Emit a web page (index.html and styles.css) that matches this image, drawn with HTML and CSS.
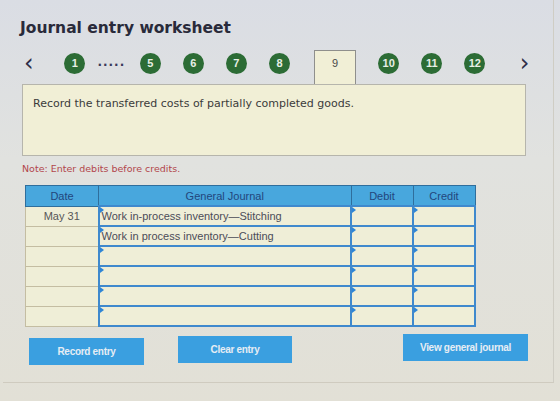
FILE: index.html
```html
<!DOCTYPE html>
<html lang="en">
<head>
    <meta charset="UTF-8">
    <meta name="viewport" content="width=device-width, initial-scale=1.0">
    <title>Journal entry worksheet</title>
    <link rel="stylesheet" href="styles.css">
</head>
<body>

    <div class="sheet">
        <h1 class="title">Journal entry worksheet</h1>

        <!-- Step navigation -->
        <div class="steps">
            <span class="arrow prev">&lsaquo;</span>
            <span class="slot"><span class="dot">1</span></span>
            <span class="more">.....</span>
            <span class="slot"><span class="dot">5</span></span>
            <span class="slot"><span class="dot">6</span></span>
            <span class="slot"><span class="dot">7</span></span>
            <span class="slot"><span class="dot">8</span></span>
            <span class="tab">9</span>
            <span class="slot"><span class="dot">10</span></span>
            <span class="slot"><span class="dot">11</span></span>
            <span class="slot"><span class="dot">12</span></span>
            <span class="arrow next">&rsaquo;</span>
        </div>

        <div class="task">
            Record the transferred costs of partially completed goods.
        </div>

        <p class="note">Note: Enter debits before credits.</p>

        <table class="journal">
            <thead>
                <tr>
                    <th class="c-date">Date</th>
                    <th class="c-acct">General Journal</th>
                    <th class="c-amt">Debit</th>
                    <th class="c-amt">Credit</th>
                </tr>
            </thead>
            <tbody>
                <tr>
                    <td class="date">May 31</td>
                    <td class="field acct">Work in-process inventory&mdash;Stitching</td>
                    <td class="field"></td>
                    <td class="field"></td>
                </tr>
                <tr>
                    <td class="date"></td>
                    <td class="field acct">Work in process inventory&mdash;Cutting</td>
                    <td class="field"></td>
                    <td class="field"></td>
                </tr>
                <tr>
                    <td class="date"></td>
                    <td class="field acct"></td>
                    <td class="field"></td>
                    <td class="field"></td>
                </tr>
                <tr>
                    <td class="date"></td>
                    <td class="field acct"></td>
                    <td class="field"></td>
                    <td class="field"></td>
                </tr>
                <tr>
                    <td class="date"></td>
                    <td class="field acct"></td>
                    <td class="field"></td>
                    <td class="field"></td>
                </tr>
                <tr>
                    <td class="date"></td>
                    <td class="field acct"></td>
                    <td class="field"></td>
                    <td class="field"></td>
                </tr>
            </tbody>
        </table>

        <div class="actions">
            <button class="btn record">Record entry</button>
            <button class="btn clear">Clear entry</button>
            <button class="btn view">View general journal</button>
        </div>
    </div>

</body>
</html>
```

FILE: styles.css
```css
/* Page */
body {
    margin: 0;
    height: 401px;
    overflow: hidden;
    font-family: "DejaVu Sans", Verdana, sans-serif;
    background: linear-gradient(180deg, #dadde4 0%, #e1e2df 40%, #e2e0d6 100%);
}

.sheet {
    height: 383px;
    margin-left: 3px;
    width: 551px;
    box-sizing: border-box;
    border-right: 1px solid #cfcdc4;
    border-bottom: 1px solid #cfcbbf;
    padding: 18px 0 0 17px;
}

/* Title */
.title {
    margin: 0;
    font-size: 15.5px;
    font-weight: bold;
    color: #292a3a;
    line-height: 21px;
}

/* Step navigation */
.steps {
    display: flex;
    align-items: flex-start;
    height: 34px;
    margin-top: 11px;
    margin-left: 4px;
}

.arrow {
    font-family: "DejaVu Sans", sans-serif;
    font-size: 24px;
    line-height: 24px;
    color: #2e2e48;
    margin-top: 1px;
}

.prev {
    width: 30px;
}

.next {
    width: 58px;
    text-align: center;
}

.slot {
    width: 44px;
    display: flex;
    justify-content: center;
}

.dot {
    width: 21px;
    height: 21px;
    margin-top: 3px;
    border-radius: 50%;
    background: #2c6c35;
    color: #e8efe6;
    font-family: "Liberation Sans", Arial, sans-serif;
    font-size: 11px;
    font-weight: bold;
    line-height: 21px;
    text-align: center;
}

.more {
    width: 33px;
    box-sizing: border-box;
    padding-left: 1px;
    color: #39395a;
    font-size: 12px;
    letter-spacing: 1px;
    font-weight: bold;
    line-height: 24px;
}

.tab {
    position: relative;
    z-index: 1;
    width: 43px;
    height: 34px;
    margin-left: 13px;
    margin-right: 11px;
    box-sizing: border-box;
    border: 1px solid #8f8f8c;
    border-bottom: none;
    background: #f1efd6;
    color: #4a4a4a;
    font-family: "Liberation Sans", Arial, sans-serif;
    font-size: 11px;
    text-align: center;
    padding-top: 6px;
}

/* Task description */
.task {
    width: 504px;
    height: 72px;
    margin-left: 2px;
    box-sizing: border-box;
    border: 1px solid #b6b5ac;
    background: #f1efd6;
    padding: 12px 0 0 10px;
    font-size: 11px;
    color: #3b3b3b;
}

.note {
    margin: 7px 0 0 2px;
    font-size: 9.5px;
    color: #b2464c;
}

/* Journal table */
.journal {
    margin: 11px 0 0 5px;
    width: 451px;
    border-collapse: collapse;
    font-family: "Liberation Sans", Arial, sans-serif;
    font-size: 11px;
    border: 1px solid #8e8f8c;
}

.journal th {
    height: 19px;
    padding: 0;
    background: #48a7dd;
    color: #23467c;
    font-weight: normal;
    border: 1px solid #2f6e9c;
}

.c-date {
    width: 72px;
}

.c-amt {
    width: 61px;
}

.journal td {
    height: 18px;
    padding: 0 2px;
    background: #efeed7;
    position: relative;
}

.journal td.date {
    border: 1px solid #c4bda2;
    text-align: center;
    color: #575757;
}

.journal td.field {
    border: 2px solid #3f89cd;
    color: #4c4c58;
}

/* small marker in the corner of each input cell */
.journal td.field::before {
    content: "";
    position: absolute;
    left: 0;
    top: 0;
    border-top: 3px solid transparent;
    border-bottom: 3px solid transparent;
    border-left: 4px solid #2f86d6;
}

/* Buttons */
.actions {
    display: flex;
    align-items: flex-start;
    margin-top: 9px;
    margin-left: 9px;
}

.btn {
    height: 27px;
    border: none;
    background: #3a9fe0;
    color: #e6edf4;
    font-family: "Liberation Sans", Arial, sans-serif;
    font-size: 10px;
    font-weight: bold;
    letter-spacing: -0.3px;
}

.record {
    width: 115px;
    margin-top: 2px;
}

.clear {
    width: 114px;
    margin-left: 34px;
}

.view {
    width: 125px;
    margin-left: 111px;
    margin-top: -2px;
}
```
